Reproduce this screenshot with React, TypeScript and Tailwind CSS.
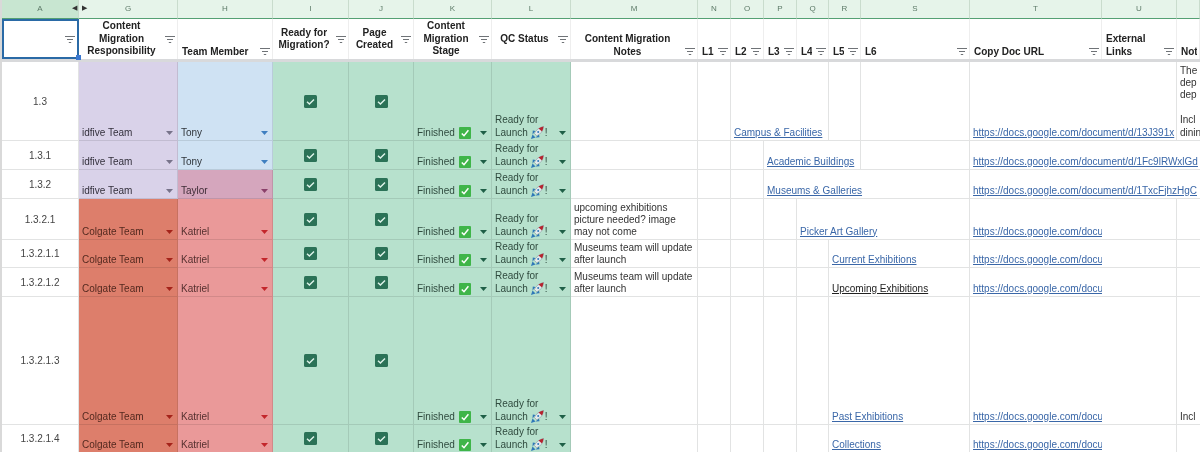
import React from 'react';

const FONT = { fontFamily: '"Liberation Sans", Arial, sans-serif' };

const letters = ['A', 'G', 'H', 'I', 'J', 'K', 'L', 'M', 'N', 'O', 'P', 'Q', 'R', 'S', 'T', 'U', ''];

const spanClass: Record<number, string> = {
  1: 'col-span-1',
  2: 'col-span-2',
  3: 'col-span-3',
  4: 'col-span-4',
};

const Filter = () => (
  <svg width="10" height="7" viewBox="0 0 10 7" className="shrink-0">
    <path d="M0 .5h10M2 3.5h6M3.8 6.5h2.4" stroke="#6f7377" strokeWidth="1" fill="none" />
  </svg>
);

const Caret = ({ color }: { color: string }) => (
  <svg width="7" height="4" viewBox="0 0 7 4" className="mb-[4px] shrink-0">
    <path d="M0 0h7L3.5 4z" fill={color} />
  </svg>
);

const CheckBox = () => (
  <svg width="13" height="13" viewBox="0 0 13 13">
    <rect width="13" height="13" rx="1.5" fill="#2b7257" />
    <path d="M3 6.8l2.4 2.3L10 4.4" stroke="#dff3ea" strokeWidth="1.4" fill="none" />
  </svg>
);

const GreenTick = () => (
  <svg width="12" height="12" viewBox="0 0 12 12" className="ml-[4px] shrink-0">
    <rect width="12" height="12" rx="1" fill="#3fb549" />
    <path d="M2.8 6.4l2.2 2.3L9.4 3.2" stroke="#fff" strokeWidth="1.5" fill="none" />
  </svg>
);

const Rocket = () => (
  <svg width="13" height="13" viewBox="0 0 13 13" className="ml-[3px] mr-[1px] shrink-0">
    <path d="M0 13l1.500-4.500 3 3z" fill="#2f78b8" />
    <path d="M1.500 8.500L4.500 5 1.800 4.500zM4.500 11.500L8 8.500l.5 2.700z" fill="#2f78b8" />
    <path d="M3.400 7.400C5 4 8 1.600 12.500.5c-.5 4.500-2.800 7.500-6.700 9.300z" fill="#e4eaee" stroke="#5d6f7c" strokeWidth=".4" />
    <path d="M7.500 2.600C9 1.600 10.700.9 12.500.5c-.2 1.900-.7 3.600-1.500 5z" fill="#b5242f" />
    <circle cx="7.200" cy="6" r="1" fill="#2f78b8" />
  </svg>
);

const Header = ({
  lines,
  left,
  bottom,
  selected,
}: {
  lines: string[];
  left?: boolean;
  bottom?: boolean;
  selected?: boolean;
}) => (
  <div
    className={`relative flex h-full gap-[4px] pr-[2px] ${left ? 'pl-[4px]' : 'pl-[3px]'} ${bottom ? 'items-end pb-[1px]' : 'items-center'} ${
      selected ? 'border-2 border-[#2a6aa6]' : 'border-r border-[#eeeeee]'
    }`}
  >
    <div className={`flex-1 overflow-hidden whitespace-nowrap font-bold leading-[12.5px] ${left ? 'text-left' : 'text-center'}`}>
      {lines.map((l) => (
        <div key={l}>{l}</div>
      ))}
    </div>
    {lines[0] !== 'Not' && (
      <span className={bottom ? 'mb-[3px] flex' : 'flex'}>
        <Filter />
      </span>
    )}
    {selected && <span className="absolute bottom-[-3px] right-[-4px] h-[5px] w-[5px] bg-[#3b78d0]" />}
  </div>
);

const ChipCell = ({
  text,
  bg,
  color,
  caret,
}: {
  text: string;
  bg: string;
  color: string;
  caret: string;
}) => (
  <div className={`flex items-end justify-between border-b border-r border-black/10 pb-[1px] pl-[3px] pr-[4px] leading-[12.5px] ${bg} ${color}`}>
    <span>{text}</span>
    <Caret color={caret} />
  </div>
);

const CheckCell = () => (
  <div className="flex items-center justify-center border-b border-r border-black/10 bg-[#b7e1cd]">
    <CheckBox />
  </div>
);

type RowData = {
  id: string;
  team: string;
  member: string;
  notes?: string[];
  levels: { span: number; text?: string; dark?: boolean }[];
  url: string;
  urlSpan: number;
  side?: string[];
};

const Row = ({ r }: { r: RowData }) => {
  const colgate = r.team === 'Colgate Team';
  const taylor = r.member === 'Taylor';
  const tony = r.member === 'Tony';
  return (
    <>
      <div className="flex items-center justify-center border-b border-r border-[#e2e3e3] text-[#444444]">{r.id}</div>
      {colgate ? (
        <ChipCell text={r.team} bg="bg-[#dd7e6b]" color="text-[#53291f]" caret="#a4231a" />
      ) : (
        <ChipCell text={r.team} bg="bg-[#d9d2e9]" color="text-[#33303c]" caret="#77738a" />
      )}
      {tony && <ChipCell text={r.member} bg="bg-[#cfe2f3]" color="text-[#30363c]" caret="#3f7fc0" />}
      {taylor && <ChipCell text={r.member} bg="bg-[#d5a6bd]" color="text-[#3e2c36]" caret="#8a3f6a" />}
      {!tony && !taylor && <ChipCell text={r.member} bg="bg-[#ea9999]" color="text-[#55302f]" caret="#c3262b" />}
      <CheckCell />
      <CheckCell />
      <div className="flex items-end justify-between border-b border-r border-black/10 bg-[#b7e1cd] pb-[1px] pl-[3px] pr-[4px] leading-[12.5px] text-[#2f4a3e]">
        <span className="flex items-end">
          Finished
          <GreenTick />
        </span>
        <Caret color="#1f5f47" />
      </div>
      <div className="flex items-end justify-between border-b border-r border-black/10 bg-[#b7e1cd] pb-[1px] pl-[3px] pr-[4px] leading-[12.5px] text-[#2f4a3e]">
        <div>
          <div>Ready for</div>
          <div className="flex h-[12.5px] items-center">
            Launch
            <Rocket />!
          </div>
        </div>
        <Caret color="#1f5f47" />
      </div>
      <div className="flex flex-col justify-end border-b border-r border-[#e2e3e3] pb-[1px] pl-[3px] leading-[12px] text-[#333333]">
        {r.notes?.map((n) => (
          <div key={n}>{n}</div>
        ))}
      </div>
      {r.levels.map((l, i) => (
        <div
          key={i}
          className={`flex items-end overflow-hidden whitespace-nowrap border-b border-r border-[#e2e3e3] pb-[1px] pl-[3px] leading-[12.5px] ${spanClass[l.span]}`}
        >
          {l.text && <span className={`underline ${l.dark ? 'text-[#222222]' : 'text-[#3a67a8]'}`}>{l.text}</span>}
        </div>
      ))}
      <div
        className={`flex items-end overflow-hidden whitespace-nowrap border-b border-[#e2e3e3] pb-[1px] pl-[3px] leading-[12.5px] ${spanClass[r.urlSpan]} ${
          r.urlSpan === 2 ? 'border-r' : ''
        }`}
      >
        <span className="text-[#3a67a8] underline">{r.url}</span>
      </div>
      {r.urlSpan === 1 && <div className="border-b border-r border-[#e2e3e3]" />}
      {r.urlSpan < 3 && (
        <div className="flex flex-col justify-end overflow-hidden whitespace-nowrap border-b border-[#e2e3e3] pb-[1px] pl-[3px] leading-[12.4px] text-[#333333]">
          {r.side?.map((s, i) => (
            <div key={i} className="h-[12.4px]">
              {s}
            </div>
          ))}
        </div>
      )}
    </>
  );
};

const shortUrl = 'https://docs.google.com/document/d/1abc';

const rows: RowData[] = [
  {
    id: '1.3',
    team: 'idfive Team',
    member: 'Tony',
    levels: [{ span: 1 }, { span: 3, text: 'Campus & Facilities' }, { span: 1 }, { span: 1 }],
    url: 'https://docs.google.com/document/d/13J391x',
    urlSpan: 2,
    side: ['The', 'dep', 'dep', '', 'Incl', 'dining'],
  },
  {
    id: '1.3.1',
    team: 'idfive Team',
    member: 'Tony',
    levels: [{ span: 1 }, { span: 1 }, { span: 3, text: 'Academic Buildings' }, { span: 1 }],
    url: 'https://docs.google.com/document/d/1Fc9lRWxlGd',
    urlSpan: 3,
  },
  {
    id: '1.3.2',
    team: 'idfive Team',
    member: 'Taylor',
    levels: [{ span: 1 }, { span: 1 }, { span: 4, text: 'Museums & Galleries' }],
    url: 'https://docs.google.com/document/d/1TxcFjhzHgC',
    urlSpan: 3,
  },
  {
    id: '1.3.2.1',
    team: 'Colgate Team',
    member: 'Katriel',
    notes: ['upcoming exhibitions', 'picture needed? image', 'may not come'],
    levels: [{ span: 1 }, { span: 1 }, { span: 1 }, { span: 3, text: 'Picker Art Gallery' }],
    url: shortUrl,
    urlSpan: 1,
  },
  {
    id: '1.3.2.1.1',
    team: 'Colgate Team',
    member: 'Katriel',
    notes: ['Museums team will update', 'after launch'],
    levels: [{ span: 1 }, { span: 1 }, { span: 1 }, { span: 1 }, { span: 2, text: 'Current Exhibitions' }],
    url: shortUrl,
    urlSpan: 1,
  },
  {
    id: '1.3.2.1.2',
    team: 'Colgate Team',
    member: 'Katriel',
    notes: ['Museums team will update', 'after launch'],
    levels: [{ span: 1 }, { span: 1 }, { span: 1 }, { span: 1 }, { span: 2, text: 'Upcoming Exhibitions', dark: true }],
    url: shortUrl,
    urlSpan: 1,
  },
  {
    id: '1.3.2.1.3',
    team: 'Colgate Team',
    member: 'Katriel',
    levels: [{ span: 1 }, { span: 1 }, { span: 1 }, { span: 1 }, { span: 2, text: 'Past Exhibitions' }],
    url: shortUrl,
    urlSpan: 1,
    side: ['Incl'],
  },
  {
    id: '1.3.2.1.4',
    team: 'Colgate Team',
    member: 'Katriel',
    levels: [{ span: 1 }, { span: 1 }, { span: 1 }, { span: 1 }, { span: 2, text: 'Collections' }],
    url: shortUrl,
    urlSpan: 1,
  },
];

export default function App() {
  return (
    <div
      className="h-[452px] w-[1200px] overflow-hidden border-l-2 border-[#d9d9d9] bg-white text-[10px] text-[#222222] blur-[0.35px]"
      style={FONT}
    >
      <div className="grid grid-cols-[77px_99px_95px_76px_65px_78px_79px_127px_33px_33px_33px_32px_32px_109px_132px_75px_23px] grid-rows-[19px_43px_79px_29px_29px_41px_28px_29px_128px_28px]">
        {/* column letters */}
        {letters.map((l, i) => (
          <div
            key={i}
            className={`relative flex items-center justify-center border-b border-r border-b-[#55a074] border-r-[#c9dccd] pb-[1px] text-[8px] text-[#5d7a68] ${
              i === 0 ? 'bg-[#c8e6d1]' : 'bg-[#e6f4ea]'
            }`}
          >
            {l}
            {i === 0 && <span className="absolute right-[1px] text-[7px] text-[#333333]">◀</span>}
            {i === 1 && <span className="absolute left-[3px] text-[7px] text-[#333333]">▶</span>}
          </div>
        ))}

        {/* header row with the frozen bar below */}
        <div className="col-span-full grid grid-cols-subgrid border-b-[3px] border-[#d8d9db]">
          <Header lines={[]} selected />
          <Header lines={['Content', 'Migration', 'Responsibility']} />
          <Header lines={['Team Member']} left bottom />
          <Header lines={['Ready for', 'Migration?']} />
          <Header lines={['Page', 'Created']} />
          <Header lines={['Content', 'Migration', 'Stage']} />
          <Header lines={['QC Status']} />
          <Header lines={['Content Migration', 'Notes']} bottom />
          <Header lines={['L1']} left bottom />
          <Header lines={['L2']} left bottom />
          <Header lines={['L3']} left bottom />
          <Header lines={['L4']} left bottom />
          <Header lines={['L5']} left bottom />
          <Header lines={['L6']} left bottom />
          <Header lines={['Copy Doc URL']} left bottom />
          <Header lines={['External', 'Links']} left bottom />
          <Header lines={['Not']} left bottom />
        </div>

        {rows.map((r) => (
          <Row key={r.id} r={r} />
        ))}
      </div>
    </div>
  );
}
